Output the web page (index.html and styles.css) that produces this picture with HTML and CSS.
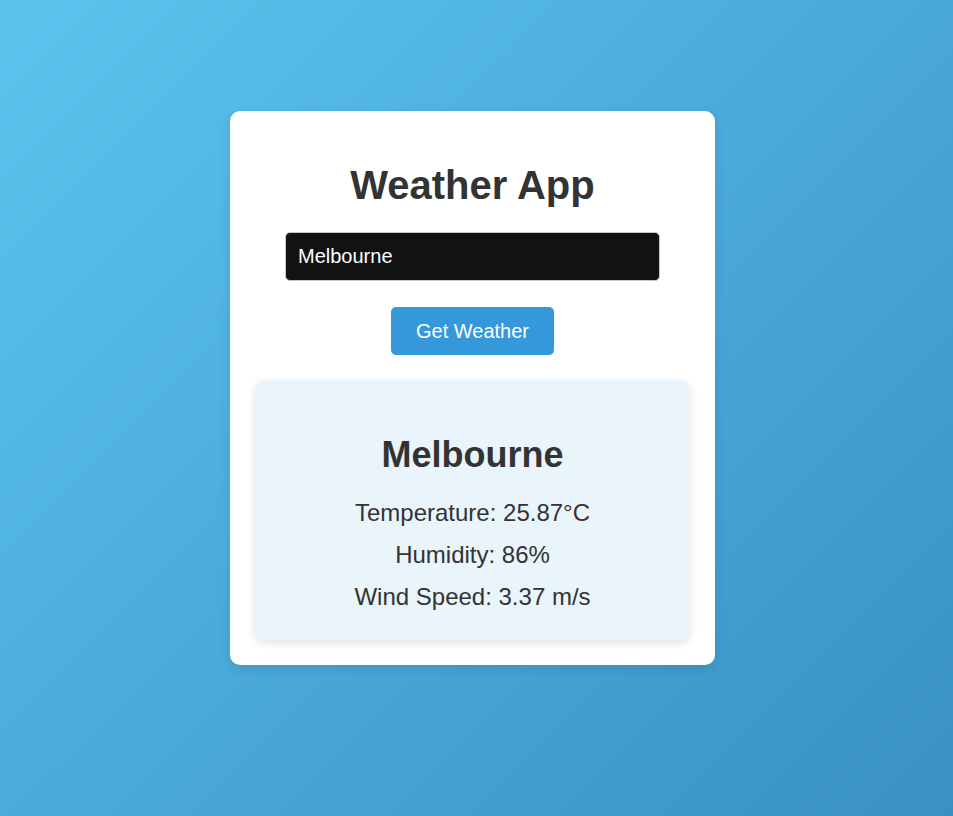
FILE: index.html
```html
<!DOCTYPE html>
<html lang="en">
<head>
<meta charset="utf-8">
<title>Weather App</title>
<link rel="stylesheet" href="styles.css">
</head>
<body>
  <div class="card">
    <h1 class="title">Weather App</h1>
    <input class="city" type="text" value="Melbourne">
    <button class="btn" type="button">Get Weather</button>
    <div class="result">
      <h2 class="city-name">Melbourne</h2>
      <p class="stat">Temperature: 25.87°C</p>
      <p class="stat">Humidity: 86%</p>
      <p class="stat">Wind Speed: 3.37 m/s</p>
    </div>
  </div>
</body>
</html>
```

FILE: styles.css
```css
html, body {
  margin: 0;
  height: 100%;
}
body {
  box-sizing: border-box;
  min-height: 100vh;
  padding: 0 8px 41px 0;
  display: flex;
  align-items: center;
  justify-content: center;
  background: linear-gradient(135deg, #5bc4ed 0%, #3990c5 100%);
  font-family: "Liberation Sans", Arial, sans-serif;
  color: #333;
}
.card {
  box-sizing: border-box;
  width: 485px;
  background: #fff;
  border-radius: 10px;
  padding: 25px;
  display: flex;
  flex-direction: column;
  align-items: center;
  box-shadow: 0 4px 12px rgba(0, 0, 0, 0.1);
}
.title {
  margin: 26px 0 24px;
  font-size: 40px;
  line-height: 46px;
  font-weight: bold;
  color: #333;
}
.city {
  box-sizing: border-box;
  width: 375px;
  height: 49px;
  padding: 12px;
  font-family: inherit;
  font-size: 20px;
  color: #fff;
  background: #121212;
  border: 1px solid #c8c8c8;
  border-radius: 5px;
  outline: none;
  margin: 0;
}
.btn {
  margin: 26px 0 25px;
  height: 48px;
  padding: 0 25px;
  font-family: inherit;
  font-size: 20px;
  line-height: 24px;
  color: #fff;
  background: #3498db;
  border: none;
  border-radius: 5px;
  cursor: pointer;
}
.result {
  box-sizing: border-box;
  align-self: stretch;
  background: #eaf4fb;
  border-radius: 10px;
  padding: 20px 20px 22px;
  text-align: center;
  box-shadow: 0 3px 8px rgba(0, 0, 0, 0.12);
}
.city-name {
  margin: 34px 0 17px;
  font-size: 36px;
  line-height: 41px;
  font-weight: bold;
  color: #333;
}
.stat {
  margin: 0;
  font-size: 24px;
  line-height: 42px;
  color: #333;
}
```
